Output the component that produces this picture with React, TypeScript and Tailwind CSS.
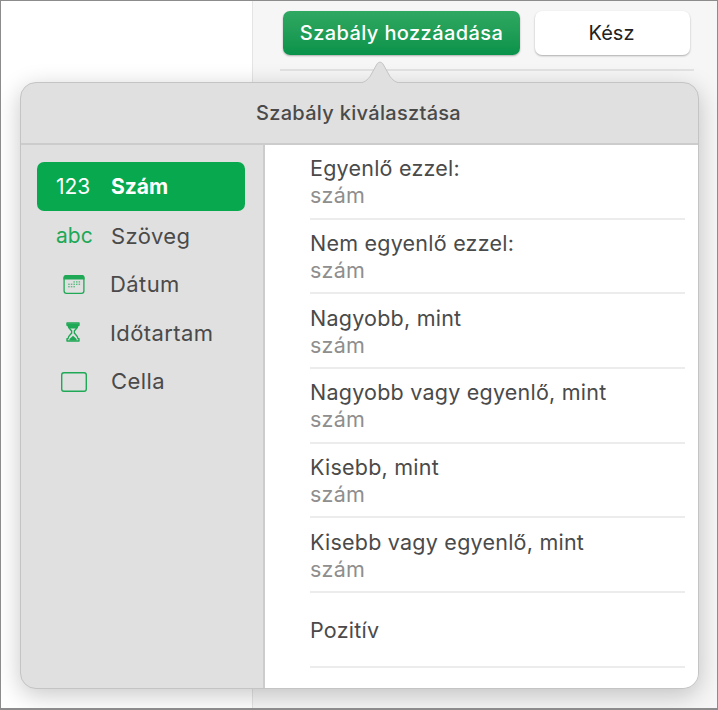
import React from "react";

const rows = [
  { t: "Egyenlő ezzel:", s: "szám" },
  { t: "Nem egyenlő ezzel:", s: "szám" },
  { t: "Nagyobb, mint", s: "szám" },
  { t: "Nagyobb vagy egyenlő, mint", s: "szám" },
  { t: "Kisebb, mint", s: "szám" },
  { t: "Kisebb vagy egyenlő, mint", s: "szám" },
  { t: "Pozitív" },
];

function Calendar() {
  const dots = [];
  for (let r = 0; r < 3; r++)
    for (let c = 0; c < 5; c++) {
      if ((r === 0 && c < 2) || (r === 2 && c > 2)) continue;
      dots.push(<rect key={r + "-" + c} x={6.2 + c * 2.6} y={8.2 + r * 2.4} width="1.5" height="1.4" fill="#5dbb82" />);
    }
  return (
    <svg width="24" height="22" viewBox="0 0 24 22">
      <rect x="2.1" y="2.6" width="19.800" height="17.800" rx="2.400" fill="none" stroke="#1fa855" strokeWidth="1.300" />
      <path d="M1.500 5a3 3 0 0 1 3-3h15a3 3 0 0 1 3 3v1.500h-21z" fill="#1fa855" />
      {dots}
    </svg>
  );
}

function Hourglass() {
  return (
    <svg width="16" height="22" viewBox="0 0 16 22">
      <path d="M2 1h12v2.200h-1c-.2 2.600-2 4-3.600 5.600v2.400c1.600 1.600 3.400 3 3.600 5.600h1V19H2v-2.200h1c.2-2.600 2-4 3.600-5.600V8.800C5 7.200 3.200 5.800 3 3.200H2z" fill="none" stroke="#1fa855" strokeWidth="1.400" strokeLinejoin="round" />
      <path d="M2.500 1.500h11v1.700c-.3 1.600-1 2.600-1.800 3.400H4.300c-.8-.8-1.500-1.800-1.800-3.400z" fill="#1fa855" />
      <path d="M8 13.800l3.600 3.200v1.500H4.400V17z" fill="#1fa855" />
    </svg>
  );
}

function Cell() {
  return (
    <svg width="28" height="22" viewBox="0 0 28 22">
      <rect x="1.700" y="1.700" width="24.600" height="18.600" rx="2.200" fill="none" stroke="#1fa855" strokeWidth="1.400" />
    </svg>
  );
}

export default function App() {
  return (
    <div className="relative flex h-[710px] w-[718px] overflow-hidden border border-b-2 border-[#8c8c8c] bg-white text-[#4a4a4a]" style={{ fontFamily: "Inter, 'Noto Sans', sans-serif" }}>
      <div className="w-[251px] shrink-0 bg-white" />
      <div className="flex-1 border-l border-[#e4e4e4] bg-[#f6f6f6] pl-[30px] pr-[27px] pt-[10px]">
        <div className="flex gap-[15px]">
          <div className="flex h-[44px] w-[237px] items-center justify-center rounded-[7px] bg-gradient-to-b from-[#2fa862] to-[#07924a] text-[20px] font-medium tracking-[0.4px] text-white shadow-[0_1px_2px_rgba(0,0,0,0.3)]">
            Szabály hozzáadása
          </div>
          <div className="flex h-[44px] w-[155px] items-center justify-center rounded-[7px] bg-white pr-[2px] text-[20px] text-[#222] shadow-[0_1px_2px_rgba(0,0,0,0.3)]">
            Kész
          </div>
        </div>
        <div className="mt-[14px] -ml-[3px] h-[2px] w-[414px] bg-[#e2e2e2]" />
      </div>

      <div className="absolute left-[19px] top-[81px] flex h-[607px] w-[679px] flex-col overflow-hidden rounded-[16px] border border-[#c4c4c4] bg-[#e0e0e0] shadow-[0_6px_24px_rgba(0,0,0,0.22)]">
        <div className="flex h-[62px] shrink-0 items-center justify-center border-b-2 border-[#cccccc] pr-[2px] text-[20px] font-medium tracking-[0.3px] text-[#4a4a4a]">
          Szabály kiválasztása
        </div>
        <div className="flex min-h-0 flex-1">
          <div className="w-[244px] shrink-0 border-r-2 border-[#cccccc] pl-[16px] pr-[18px] pt-[17px]">
            <div className="flex h-[49px] items-center rounded-[7px] bg-[#07a84e] pt-[1px] text-white">
              <span className="w-[74px] pl-[19px] text-[21px]">123</span>
              <span className="text-[21px] font-bold">Szám</span>
            </div>
            <div className="flex h-[49px] items-center pt-[1px]">
              <span className="w-[74px] pl-[19px] text-[21px] text-[#1fa855]">abc</span>
              <span className="text-[22px] tracking-[0.4px]">Szöveg</span>
            </div>
            <div className="flex h-[48px] items-center">
              <span className="flex w-[73px] justify-center"><Calendar /></span>
              <span className="text-[22px] tracking-[0.4px]">Dátum</span>
            </div>
            <div className="flex h-[49px] items-center pt-[1px]">
              <span className="flex w-[73px] justify-center pr-[2px]"><Hourglass /></span>
              <span className="text-[22px] tracking-[0.4px]">Időtartam</span>
            </div>
            <div className="flex h-[49px] items-center">
              <span className="flex w-[74px] justify-center pr-[1px]"><Cell /></span>
              <span className="text-[22px] tracking-[0.4px]">Cella</span>
            </div>
          </div>
          <div className="flex-1 bg-white pl-[45px] pr-[13px]">
            {rows.map((r) => (
              <div key={r.t} className={`flex h-[74.7px] flex-col justify-center border-b-2 border-[#ececec] pt-[1px] ${r.s ? "" : "pt-[2px]"}`}>
                <div className="text-[21.5px] leading-[28px] tracking-[0.23px] text-[#4a4a4a]">{r.t}</div>
                {r.s && <div className="text-[21.5px] leading-[27px] tracking-[0.23px] text-[#8e8e8e]">{r.s}</div>}
              </div>
            ))}
          </div>
        </div>
      </div>

      <svg className="absolute left-[351px] top-[59px]" width="56" height="24" viewBox="0 0 56 24">
        <path d="M2 23.500c8 0 12-1.500 16-7L25 4c1.500-2.400 4.500-2.400 6 0l7 12.500c4 5.500 8 7 16 7z" fill="#e0e0e0" stroke="#c4c4c4" strokeWidth="1" />
        <rect x="0" y="23" width="56" height="2" fill="#e0e0e0" />
      </svg>
    </div>
  );
}
